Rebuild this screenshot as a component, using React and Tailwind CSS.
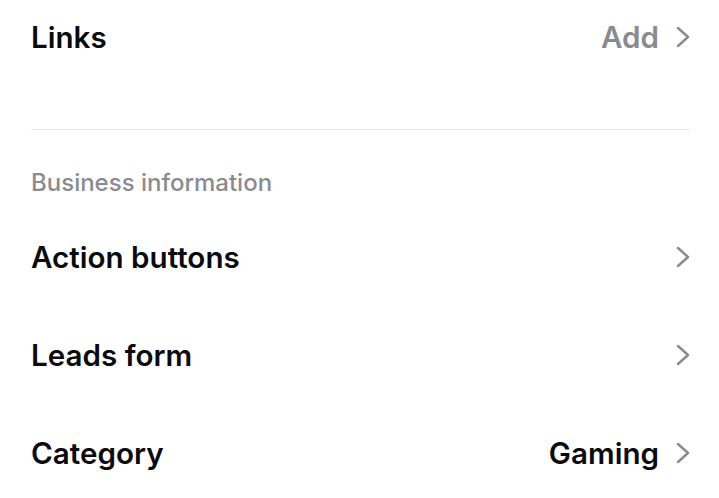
import React from 'react'

function Chevron() {
  return (
    <svg width="14" height="22" viewBox="0 0 14 22" fill="none" className="shrink-0">
      <polyline points="2,2 12,11 2,20" stroke="#8a8b91" strokeWidth="2.4" strokeLinecap="round" strokeLinejoin="round" />
    </svg>
  )
}

function Row({ label, value, valueGray, height = 'h-[98px]' }) {
  return (
    <div className={`flex items-center justify-between ${height}`}>
      <span className="text-[29.6px] font-semibold text-[#0b0b0f]">{label}</span>
      <div className="flex items-center gap-[17px]">
        {value && (
          <span className={`text-[29.6px] font-semibold ${valueGray ? 'text-[#8a8b91]' : 'text-[#0b0b0f]'}`}>{value}</span>
        )}
        <Chevron />
      </div>
    </div>
  )
}

export default function App() {
  return (
    <div className="w-[719px] h-[498px] overflow-hidden bg-white pl-[31px] pr-[29px]" style={{ fontFamily: 'Inter, "Noto Sans", sans-serif' }}>
      <Row label="Links" value="Add" valueGray height="h-[75px]" />
      <div className="h-[54px]" />
      <div className="h-px bg-[#e8e8e8]" />
      <div className="h-[78px] pt-[38px]">
        <div className="text-[24px] leading-[30px] font-medium text-[#8a8b91]">Business information</div>
      </div>
      <Row label="Action buttons" />
      <Row label="Leads form" />
      <Row label="Category" value="Gaming" />
    </div>
  )
}
